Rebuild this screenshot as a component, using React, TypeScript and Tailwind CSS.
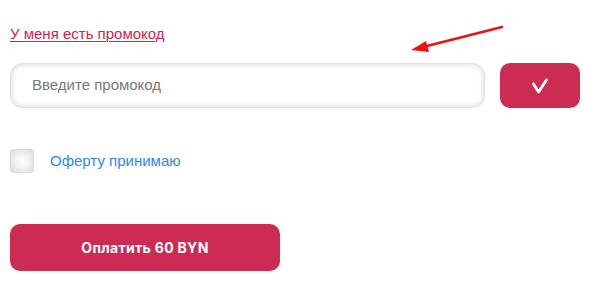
import React from "react";

export default function App() {
  return (
    <div className="relative w-[607px] h-[281px] bg-white px-[10px] pt-[25px]" style={{ fontFamily: '"Liberation Sans", Arial, sans-serif' }}>
      <a href="#" className="block w-fit text-[15px] leading-[17px] text-[#d0244b] underline underline-offset-[2px] decoration-1">
        У меня есть промокод
      </a>
      <svg className="absolute left-[405px] top-[20px]" width="105" height="38" viewBox="0 0 105 38">
        <line x1="97" y1="7" x2="18" y2="27" stroke="#ee1111" strokeWidth="2.5" strokeLinecap="round" />
        <polygon points="6,30 21,21 24,32" fill="#ee1111" />
      </svg>
      <div className="mt-[21px] flex gap-[15px]">
        <div className="w-[475px] h-[45px] rounded-[12px] border border-[#e2e2e2] bg-white shadow-[inset_0_0_6px_rgba(0,0,0,0.18)] flex items-center pl-[21px]">
          <span className="text-[15px] text-[#777777]">Введите промокод</span>
        </div>
        <button className="w-[80px] h-[45px] rounded-[10px] bg-[#cc2c52] flex items-center justify-center">
          <svg width="20" height="18" viewBox="0 0 20 18">
            <path d="M3.5 7 L8.5 15 L16.5 3" fill="none" stroke="white" strokeWidth="2.8" strokeLinecap="round" strokeLinejoin="round" />
          </svg>
        </button>
      </div>
      <div className="mt-[41px] flex items-center gap-[16px]">
        <div className="w-[24px] h-[24px] rounded-[3px] border border-[#dcdcdc] bg-[radial-gradient(circle,#ffffff_0%,#f2f2f2_45%,#dcdcdc_100%)]" />
        <span className="text-[15px] text-[#2f86f6]">Оферту принимаю</span>
      </div>
      <button
        className="mt-[51px] w-[270px] h-[47px] rounded-[10px] bg-[#cc2c52] text-white text-[14px] font-bold tracking-[0.3px] flex items-center justify-center"
        style={{ fontFamily: 'Inter, "Liberation Sans", sans-serif' }}
      >
        Оплатить 60 BYN
      </button>
    </div>
  );
}
